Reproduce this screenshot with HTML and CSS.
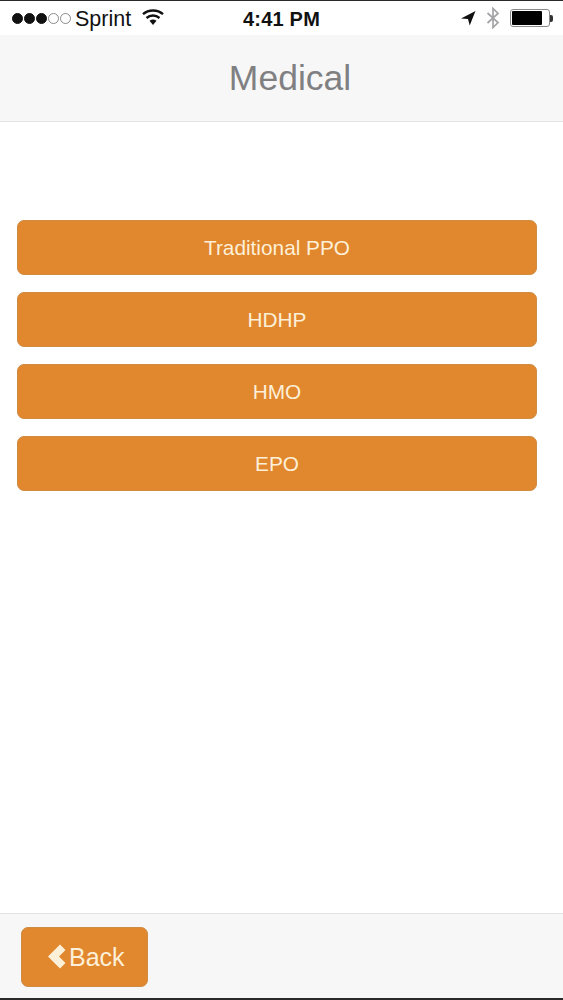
FILE: index.html
```html
<!DOCTYPE html>
<html lang="en">
<head>
<meta charset="utf-8">
<title>Medical</title>
<link rel="stylesheet" href="styles.css">
</head>
<body>
<div class="phone">
  <div class="status">
    <div class="status-left">
      <span class="dots"><i class="dot on"></i><i class="dot on"></i><i class="dot on"></i><i class="dot"></i><i class="dot"></i></span>
      <span class="carrier">Sprint</span>
      <svg class="wifi" width="22" height="18" viewBox="0 0 22 18"><path d="M1 6.200C6.500 1.200 15.500 1.200 21 6.200" fill="none" stroke="#111" stroke-width="2.400"/><path d="M4.500 10C8.300 6.700 13.700 6.700 17.500 10" fill="none" stroke="#111" stroke-width="2.400"/><path d="M7.500 12.800C9.800 11 12.200 11 14.500 12.800L11 17Z" fill="#111"/></svg>
    </div>
    <div class="time">4:41 PM</div>
    <div class="status-right">
      <svg class="arrow" width="16" height="16" viewBox="0 0 16 16"><path d="M15.500 1L1 8.500L8 9L9.700 15.500Z" fill="#111"/></svg>
      <svg class="bt" width="14" height="22" viewBox="0 0 14 22"><path d="M1.500 6L12 15.500L7 20.500V1.500L12 6.500L1.500 16" fill="none" stroke="#a3a3a5" stroke-width="1.700"/></svg>
      <span class="battery"><span class="level"></span></span><span class="nub"></span>
    </div>
  </div>
  <header class="nav"><h1>Medical</h1></header>
  <main class="list">
    <a class="plan">Traditional PPO</a>
    <a class="plan">HDHP</a>
    <a class="plan">HMO</a>
    <a class="plan">EPO</a>
  </main>
  <footer class="foot">
    <a class="back">
      <svg class="chev" width="18" height="25" viewBox="0 0 18 25"><path d="M12 0.500L17.500 6L11 12.500L17.500 19L12 24.500L0 12.500Z" fill="#fdf0d8"/></svg>
      <span>Back</span>
    </a>
  </footer>
</div>
</body>
</html>
```
FILE: styles.css
```css
* { box-sizing: border-box; }
html, body { margin: 0; padding: 0; background: #fff; }
body { font-family: "Liberation Sans", Arial, sans-serif; }
.phone {
  width: 563px;
  height: 1000px;
  display: flex;
  flex-direction: column;
  border-top: 1px solid #2a2a2a;
  border-bottom: 2px solid #2a2a2a;
  overflow: hidden;
}
.status {
  height: 34px;
  flex: none;
  position: relative;
  display: flex;
  align-items: center;
  justify-content: space-between;
  padding: 0 10px 0 12px;
  background: #fff;
  color: #111;
}
.status-left { display: flex; align-items: center; }
.dots { display: flex; gap: 1px; margin-right: 4px; }
.dot {
  width: 11px;
  height: 11px;
  border-radius: 50%;
  border: 1px solid #8a8a8a;
}
.dot.on { background: #111; border-color: #111; }
.carrier { font-size: 21.500px; margin-right: 11px; position: relative; top: 1px; }
.wifi { margin-top: -3px; }
.time {
  position: absolute;
  left: 243px;
  top: 7px;
  font-size: 20px;
  line-height: 23px;
  font-weight: 700;
  letter-spacing: 0.2px;
}
.status-right { display: flex; align-items: center; }
.arrow { margin-right: 10px; }
.bt { margin-right: 10px; }
.battery {
  width: 40px;
  height: 18px;
  border: 1px solid #8a8a8a;
  border-radius: 3px;
  padding: 1px;
  display: block;
}
.level { display: block; width: 30px; height: 100%; background: #000; border-radius: 1px; }
.nub { width: 3px; height: 7px; background: #333; border-radius: 0 2px 2px 0; }
.nav {
  height: 87px;
  flex: none;
  background: #f7f7f8;
  border-bottom: 1px solid #e3e3e4;
  display: flex;
  align-items: center;
  justify-content: center;
  padding-left: 17px;
}
.nav h1 {
  margin: 0;
  font-size: 35.500px;
  font-weight: 400;
  color: #808082;
}
.list {
  flex: 1;
  padding: 98px 26px 0 17px;
  display: flex;
  flex-direction: column;
  gap: 17px;
}
.plan {
  height: 55px;
  flex: none;
  display: flex;
  align-items: center;
  justify-content: center;
  background: #e1872e;
  border: 1px solid #cf8c45;
  border-radius: 7px;
  color: #fdf0d8;
  font-size: 20.800px;
}
.foot {
  height: 85px;
  flex: none;
  background: #f7f7f8;
  border-top: 1px solid #e3e3e4;
  padding: 13px 0 0 21px;
}
.back {
  width: 127px;
  height: 60px;
  display: flex;
  align-items: center;
  padding-left: 26px;
  gap: 3px;
  background: #e1872e;
  border: 1px solid #cf8c45;
  border-radius: 7px;
  color: #fdf0d8;
  font-size: 25px;
}
.chev { flex: none; margin-top: -2px; }
```
